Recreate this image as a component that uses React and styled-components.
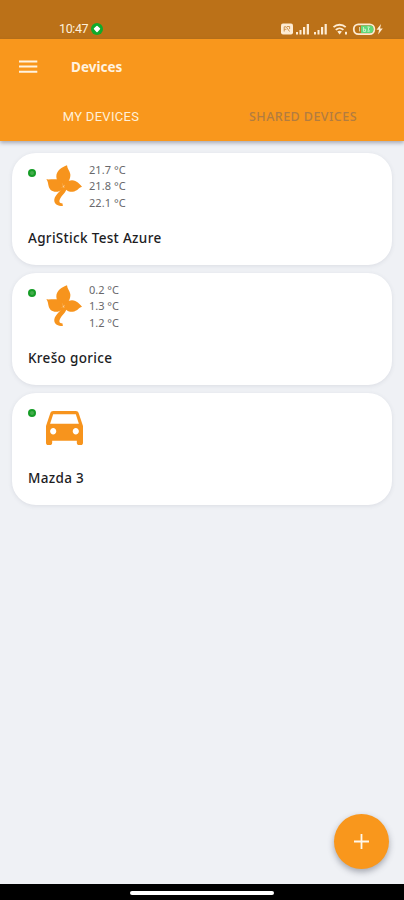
import React from 'react';
import styled, { createGlobalStyle } from 'styled-components';

const GlobalStyle = createGlobalStyle`
  * {
    box-sizing: border-box;
  }
  body {
    margin: 0;
    background: #eff1f5;
    font-family: 'Noto Sans', 'Open Sans', sans-serif;
  }
`;

const Screen = styled.div`
  display: flex;
  flex-direction: column;
  height: 900px;
  background: #eff1f5;
  overflow: hidden;
`;

const StatusBar = styled.div`
  display: flex;
  align-items: center;
  justify-content: space-between;
  flex: none;
  height: 39px;
  padding: 18px 19px 0 59px;
  background: #bb7118;
  color: #fdf0dc;
`;

const StatusGroup = styled.div`
  display: flex;
  align-items: center;
  height: 21px;
`;

const Clock = styled.span`
  width: 32px;
  font-family: Roboto, sans-serif;
  font-size: 12.5px;
  letter-spacing: -0.4px;
  line-height: 21px;
`;

const Header = styled.header`
  flex: none;
  height: 102px;
  background: #f9971c;
  box-shadow: 0 2px 4px rgba(60, 60, 80, 0.4);
`;

const TitleRow = styled.div`
  display: flex;
  align-items: center;
  height: 56px;
  padding-left: 19px;
`;

const MenuButton = styled.button`
  display: flex;
  width: 52px;
  padding: 0 0 2px;
  border: 0;
  background: none;
`;

const Title = styled.h1`
  margin: 0;
  color: #fff3e0;
  font-size: 13.5px;
  font-weight: 700;
  letter-spacing: 0;
`;

const Tabs = styled.nav`
  display: grid;
  grid-template-columns: 1fr 1fr;
  height: 46px;
`;

const Tab = styled.button`
  padding: 0 0 3px;
  border: 0;
  background: none;
  font-family: ${(props) => (props.$active ? 'Roboto' : "'Noto Sans'")}, sans-serif;
  font-size: ${(props) => (props.$active ? '13px' : '12.5px')};
  font-weight: ${(props) => (props.$active ? 400 : 500)};
  letter-spacing: ${(props) => (props.$active ? '0.3px' : '0.45px')};
  color: ${(props) => (props.$active ? '#fff0d8' : '#b27c40')};
`;

const DeviceList = styled.main`
  display: flex;
  flex-direction: column;
  flex: 1;
  gap: 8px;
  padding: 12px 12px 0;
`;

const Card = styled.section`
  height: 112px;
  padding: 8px 16px 0;
  border-radius: 24px;
  background: #fff;
  box-shadow: 0 1px 4px rgba(70, 80, 110, 0.12);
`;

const CardTop = styled.div`
  display: flex;
  align-items: flex-start;
  height: 66px;
`;

const Dot = styled.span`
  flex: none;
  width: 8px;
  height: 8px;
  margin-top: 8px;
  border: 2px solid #169d27;
  border-radius: 50%;
  background: #45ad4d;
`;

const IconBox = styled.div`
  display: flex;
  flex: none;
  width: 53px;
  padding: ${(props) => (props.$car ? '10px 0 0 10px' : '4px 0 0 10px')};
`;

const Readings = styled.div`
  padding-top: 0.5px;
  color: #68686b;
  font-size: 11px;
  line-height: 16.5px;
  white-space: nowrap;
`;

const Reading = styled.div`
  letter-spacing: ${(props) => (props.$wide ? '0.08px' : '-0.02px')};
`;

const DeviceName = styled.div`
  color: #1d1d1f;
  font-size: 13.5px;
  font-weight: 500;
  line-height: 23px;
  letter-spacing: 0.32px;
`;

const FabRow = styled.div`
  display: flex;
  justify-content: flex-end;
  flex: none;
  height: 70px;
  padding-right: 15px;
`;

const Fab = styled.button`
  display: flex;
  align-items: center;
  justify-content: center;
  width: 55px;
  height: 55px;
  padding: 0;
  border: 0;
  border-radius: 50%;
  background: #f9971c;
  box-shadow: 0 3px 6px rgba(60, 65, 80, 0.42);
`;

const NavBar = styled.div`
  display: flex;
  justify-content: center;
  flex: none;
  height: 16px;
  padding-top: 7px;
  background: #000;
`;

const NavHandle = styled.div`
  width: 144px;
  height: 4px;
  border-radius: 2px;
  background: #fff;
`;

const PrivacyIcon = () => (
  <svg width="12" height="12" viewBox="0 0 12 12">
    <circle cx="6" cy="6" r="6" fill="#0fab2c" />
    <path d="M6 3.4 L8.5 5.8 L6 8.4 L3.5 5.8z" fill="#fff" stroke="#fff" strokeWidth="1.4" strokeLinejoin="round" />
  </svg>
);

const StatusIcons = () => (
  <svg width="104" height="14" viewBox="0 0 104 14" fill="#fdebd2">
    <rect x="0" y="1.5" width="12" height="11" rx="2" />
    <path d="M3.2 9.5V4.8h2L8.5 9.5M6 4.5h2.6v2.6M3.2 7.3h2.2" fill="none" stroke="#c98a40" strokeWidth="0.9" />
    <path d="M15 10h2v2.5h-2zM18.5 8h2v4.5h-2zM22 5h2.2v7.5H22zM25.7 2h2.3v10.5h-2.3z" />
    <path d="M33 10h2v2.5h-2zM36.5 8h2v4.5h-2zM40 5h2.2v7.5H40zM43.6 2h2.2v10.5h-2.2z" />
    <path d="M52.5 5.2a8.8 8.8 0 0 1 12.2 0" fill="none" stroke="#fdebd2" strokeWidth="1.8" />
    <path d="M54.8 7.8a5.5 5.5 0 0 1 7.6 0" fill="none" stroke="#fdebd2" strokeWidth="1.8" />
    <path d="M56.3 9.6q2.3-1.7 4.6 0L58.6 12.5z" />
    <rect x="64" y="9.8" width="2" height="2.7" />
    <rect x="72.8" y="2.3" width="20.5" height="9.8" rx="4.5" fill="#bb7118" stroke="#fdebd2" strokeWidth="1.8" />
    <path d="M80 3.4h9.5q2.9 0 2.9 3.8t-2.9 3.8H80z" fill="#5fd979" />
    <path d="M78.6 5v4.4M82.4 5v4.4h2.2V7.2h-2.2M86.4 5h2l-1.2 2 1.2 2.2h-2" fill="none" stroke="#e9f8dc" strokeWidth="0.8" />
    <path d="M100 2l-4.5 5.8h2.6l-1 4.6 4.7-6h-2.7z" />
  </svg>
);

const MenuIcon = () => (
  <svg width="19" height="13" viewBox="0 0 19 13" fill="#fff3e0">
    <path d="M0 .5h18.3v2H0zM0 5.6h18.3v2H0zM0 10.7h18.3v2H0z" />
  </svg>
);

const PlantIcon = () => (
  <svg width="36" height="42" viewBox="138 60 108 126" fill="#f7941d">
    <path d="M201 61C186 67 169 77 169 94C169 108 179 117 191 122C205 114 212 102 211 88C209 77 202 72 201 61z" />
    <path d="M139 103C157 104 179 99 188 111C192 118 192 125 188 131C179 142 162 143 152 135C142 125 147 112 139 103z" />
    <path d="M246 125C238 117 231 107 216 106C202 106 194 115 192 125C195 134 205 141 218 140C232 138 236 128 246 125z" />
    <path d="M186 126C182 140 166 148 163 163C161 177 173 185 189 182L187 175C179 175 176 170 180 162C185 150 199 143 200 128z" />
    <path d="M187 115L189 123L185 129" fill="none" stroke="#fff" strokeWidth="1" opacity="0.45" />
  </svg>
);

const CarIcon = () => (
  <svg width="37" height="34" viewBox="3 5 18 16" preserveAspectRatio="none" fill="#f7941d">
    <path d="M18.92 6.01C18.72 5.42 18.16 5 17.5 5h-11c-.66 0-1.21.42-1.42 1.01L3 12v8c0 .55.45 1 1 1h1c.55 0 1-.45 1-1v-1h12v1c0 .55.45 1 1 1h1c.55 0 1-.45 1-1v-8l-2.08-5.99zM6.5 16c-.83 0-1.5-.67-1.5-1.5S5.67 13 6.5 13s1.5.67 1.5 1.5S7.33 16 6.5 16zm11 0c-.83 0-1.5-.67-1.5-1.5s.67-1.5 1.5-1.5 1.5.67 1.5 1.5-.67 1.5-1.5 1.5zM5 11l1.5-4.5h11L19 11H5z" />
  </svg>
);

const PlusIcon = () => (
  <svg width="15" height="15" viewBox="0 0 15 15">
    <path d="M7.5 0v15M0 7.5h15" stroke="#fff8ec" strokeWidth="1.8" />
  </svg>
);

const devices = [
  { name: 'AgriStick Test Azure', type: 'plant', readings: ['21.7 °C', '21.8 °C', '22.1 °C'] },
  { name: 'Krešo gorice', type: 'plant', readings: ['0.2 °C', '1.3 °C', '1.2 °C'] },
  { name: 'Mazda 3', type: 'car', readings: [] },
];

const DeviceCard = ({ device }) => {
  const isCar = device.type === 'car';
  return (
    <Card>
      <CardTop>
        <Dot />
        <IconBox $car={isCar}>{isCar ? <CarIcon /> : <PlantIcon />}</IconBox>
        <Readings>
          {device.readings.map((value) => (
            <Reading key={value} $wide={value.length > 6}>{value}</Reading>
          ))}
        </Readings>
      </CardTop>
      <DeviceName>{device.name}</DeviceName>
    </Card>
  );
};

const App = () => {
  return (
    <Screen>
      <GlobalStyle />
      <StatusBar>
        <StatusGroup>
          <Clock>10:47</Clock>
          <PrivacyIcon />
        </StatusGroup>
        <StatusGroup>
          <StatusIcons />
        </StatusGroup>
      </StatusBar>
      <Header>
        <TitleRow>
          <MenuButton aria-label='Menu'><MenuIcon /></MenuButton>
          <Title>Devices</Title>
        </TitleRow>
        <Tabs>
          <Tab $active>MY DEVICES</Tab>
          <Tab>SHARED DEVICES</Tab>
        </Tabs>
      </Header>
      <DeviceList>
        {devices.map((device) => (
          <DeviceCard key={device.name} device={device} />
        ))}
      </DeviceList>
      <FabRow>
        <Fab aria-label='Add device'><PlusIcon /></Fab>
      </FabRow>
      <NavBar>
        <NavHandle />
      </NavBar>
    </Screen>
  );
}
export default App;
